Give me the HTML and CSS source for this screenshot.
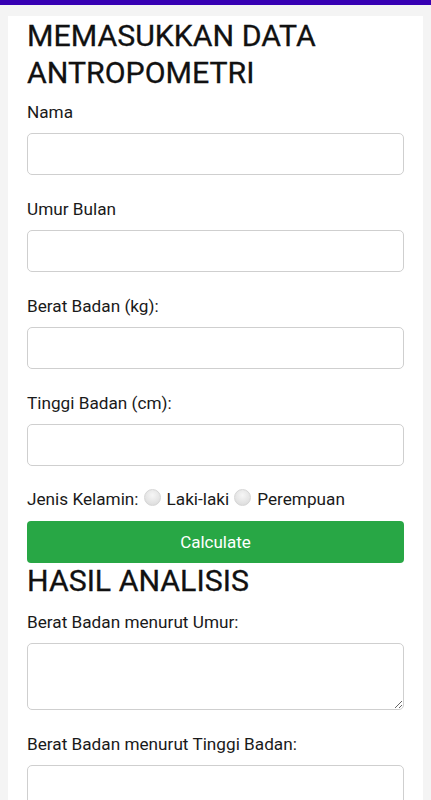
FILE: index.html
```html
<!DOCTYPE html>
<html lang="id">
<head>
<meta charset="utf-8">
<meta name="viewport" content="width=device-width, initial-scale=1">
<title>Data Antropometri</title>
<link rel="stylesheet" href="styles.css">
</head>
<body>
<div class="topbar"></div>
<main class="card">
  <h1 class="title">MEMASUKKAN DATA ANTROPOMETRI</h1>
  <form class="form">
    <label class="label" for="nama">Nama</label>
    <input class="field" id="nama" type="text">

    <label class="label" for="umur">Umur Bulan</label>
    <input class="field" id="umur" type="text">

    <label class="label" for="berat">Berat Badan (kg):</label>
    <input class="field" id="berat" type="text">

    <label class="label" for="tinggi">Tinggi Badan (cm):</label>
    <input class="field" id="tinggi" type="text">

    <div class="gender">
      <span>Jenis Kelamin:</span>
      <input class="radio" type="radio" name="jk" id="laki"><label for="laki">Laki-laki</label>
      <input class="radio" type="radio" name="jk" id="perempuan"><label for="perempuan">Perempuan</label>
    </div>

    <button class="btn" type="button">Calculate</button>
  </form>

  <h2 class="subtitle">HASIL ANALISIS</h2>
  <div class="form results">
    <label class="label" for="bbu">Berat Badan menurut Umur:</label>
    <textarea class="field area" id="bbu"></textarea>

    <label class="label" for="bbtb">Berat Badan menurut Tinggi Badan:</label>
    <textarea class="field area" id="bbtb"></textarea>
  </div>
</main>
</body>
</html>
```

FILE: styles.css
```css
* { box-sizing: border-box; }

html, body {
  margin: 0;
  padding: 0;
}

body {
  background: #f4f4f4;
  font-family: Roboto, "Liberation Sans", sans-serif;
  color: #1a1a1a;
}

.topbar {
  height: 5px;
  background: #3700b3;
}

.card {
  background: #ffffff;
  margin: 11px 8px 0;
  padding: 1px 19px 20px;
}

.title {
  margin: 0 0 11px;
  font-size: 30.3px;
  font-weight: 400;
  line-height: 37px;
  color: #111111;
  -webkit-text-stroke: 0.3px #111111;
}

.form {
  display: flex;
  flex-direction: column;
}

.label {
  font-size: 17.2px;
  line-height: 20px;
  margin-bottom: 11px;
}

.field {
  display: block;
  width: 100%;
  height: 42px;
  margin: 0 0 24px;
  border: 1px solid #cfcfcf;
  border-radius: 5px;
  background: #fff;
  font-family: inherit;
  font-size: 16px;
  padding: 6px 10px;
}

.area {
  height: 67px;
  resize: vertical;
}

.gender {
  display: flex;
  align-items: center;
  font-size: 17.2px;
  line-height: 20px;
  margin: -1px 0 12px;
}

.radio {
  appearance: none;
  -webkit-appearance: none;
  width: 17px;
  height: 17px;
  margin: 0 6px 0 5px;
  border-radius: 50%;
  border: 1px solid #d6d6d6;
  background: radial-gradient(circle at 50% 35%, #f6f6f6 0%, #e4e4e4 60%, #d6d6d6 100%);
  position: relative;
  top: -2px;
}

.btn {
  display: block;
  width: 100%;
  height: 42px;
  border: none;
  border-radius: 4px;
  background: #28a745;
  color: #ffffff;
  font-family: inherit;
  font-size: 17px;
}

.subtitle {
  margin: 0 0 14px;
  font-size: 30.3px;
  font-weight: 400;
  line-height: 35px;
  color: #111111;
  -webkit-text-stroke: 0.3px #111111;
}
```
